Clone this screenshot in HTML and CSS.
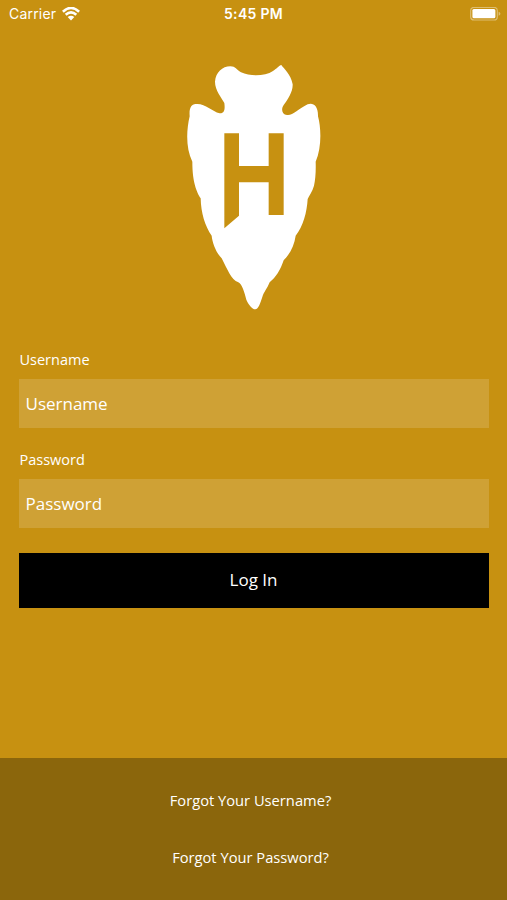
FILE: index.html
```html
<!DOCTYPE html>
<html lang="en">

<head>
    <meta charset="UTF-8">
    <meta name="viewport" content="width=device-width, initial-scale=1.0">
    <title>Log In</title>
    <link rel="stylesheet" href="styles.css">
</head>

<body>

    <header class="status-bar">
        <div class="carrier">
            <span>Carrier</span>
            <svg class="wifi" viewBox="0 0 18 14" width="18" height="14">
                <path d="M0.9 4.7 Q9 -2.8 17.1 4.7 M3.7 7.8 Q9 3 14.3 7.8" fill="none" stroke="#fff" stroke-width="2.6" />
                <path d="M5.7 10.1 Q9 7.3 12.3 10.1 L9 13.4 Z" fill="#fff" />
            </svg>
        </div>
        <div class="time">5:45 PM</div>
        <div class="battery-wrap">
            <svg class="battery" viewBox="0 0 31 14" width="31" height="14">
                <rect x="0.7" y="0.4" width="26.6" height="12.6" rx="3.3" fill="none" stroke="#fff" stroke-opacity="0.4" stroke-width="1.2" />
                <rect x="2.4" y="1.9" width="23" height="9.4" rx="1.5" fill="#fff" />
                <path d="M28.6 4.7 Q30.4 5.2 30.4 6.7 Q30.4 8.2 28.6 8.7 Z" fill="#fff" fill-opacity="0.4" />
            </svg>
        </div>
    </header>

    <main class="login">
        <svg class="logo" viewBox="0 0 480 780" width="160" height="260">
            <!-- arrowhead -->
            <path fill="#fff" d="M120 80 C122 52 142 34 166 34 C182 34 184 44 198 52 C226 65 270 64 294 48 C306 41 312 31 319 30 C326 40 348 58 353 88 C354 110 338 134 326 150 C318 162 320 178 336 180 C352 183 370 162 398 148 C414 142 430 152 429 184 C439 220 440 280 422 320 C423 350 421 374 417 392 C412 410 402 422 398 432 C396 470 384 516 362 542 C358 570 346 596 326 616 C316 646 302 668 284 682 C276 702 266 712 262 726 C256 744 250 763 241 763 C231 763 220 748 214 734 C208 712 202 688 190 682 C168 674 158 644 140 610 C124 594 112 564 110 542 C90 514 78 474 77 430 C66 412 52 384 52 320 C32 280 34 226 44 184 C42 160 48 148 62 147 C90 144 110 168 134 175 C150 176 150 160 148 144 C140 128 120 106 120 80 Z" />
            <!-- H mark -->
            <path fill="#c79111" d="M148 235 H192 V333 H281 V235 H326 V480 H281 V382 H192 V482 L148 520 Z" />
        </svg>

        <form class="login-form">
            <label for="username">Username</label>
            <input type="text" id="username" placeholder="Username">

            <label for="password">Password</label>
            <input type="password" id="password" placeholder="Password">

            <button type="button">Log In</button>
        </form>
    </main>

    <footer class="help-links">
        <a href="#">Forgot Your Username?</a>
        <a href="#">Forgot Your Password?</a>
    </footer>

</body>

</html>
```

FILE: styles.css
```css
body {
    font-family: 'Open Sans', sans-serif;
    background-color: #c79111;
    color: #fff;
    margin: 0;
    height: 100vh;
    display: flex;
    flex-direction: column;
    overflow: hidden;
}

.status-bar {
    display: grid;
    grid-template-columns: 1fr auto 1fr;
    align-items: center;
    height: 27px;
    padding: 0 6px 0 9px;
    font-family: Inter, sans-serif;
    font-size: 14px;
}

.carrier {
    display: flex;
    align-items: center;
    gap: 6px;
    letter-spacing: 0.2px;
}

.time {
    padding-right: 3px;
    font-weight: 600;
    letter-spacing: 0.3px;
}

.battery-wrap {
    display: flex;
    justify-content: flex-end;
}

.login {
    flex: 1;
    padding: 28px 18px 0 19px;
}

.logo {
    display: block;
    margin: 0 auto;
    padding-left: 2px;
}

.login-form {
    margin-top: 35px;
}

label {
    display: block;
    height: 20px;
    line-height: 20px;
    margin-bottom: 9px;
    padding-left: 0.5px;
    font-size: 14.5px;
}

input {
    display: block;
    width: 100%;
    height: 49px;
    margin-bottom: 22px;
    padding: 0 6.5px;
    box-sizing: border-box;
    border: none;
    border-radius: 0;
    background-color: #cfa135;
    color: #fff;
    font-family: inherit;
    font-size: 17px;
}

input::placeholder {
    color: #fff;
    opacity: 1;
}

button {
    display: block;
    width: 100%;
    height: 55px;
    margin-top: 25px;
    padding: 0 1px 2px 0;
    border: none;
    background-color: #000;
    color: #fff;
    font-family: inherit;
    font-size: 17px;
    cursor: pointer;
}

.help-links {
    display: flex;
    flex-direction: column;
    align-items: center;
    gap: 37px;
    height: 142px;
    padding: 32px 6px 0 0;
    box-sizing: border-box;
    background-color: #8b660c;
}

.help-links a {
    color: #fff;
    font-size: 14.7px;
    line-height: 20px;
    text-decoration: none;
}
```
